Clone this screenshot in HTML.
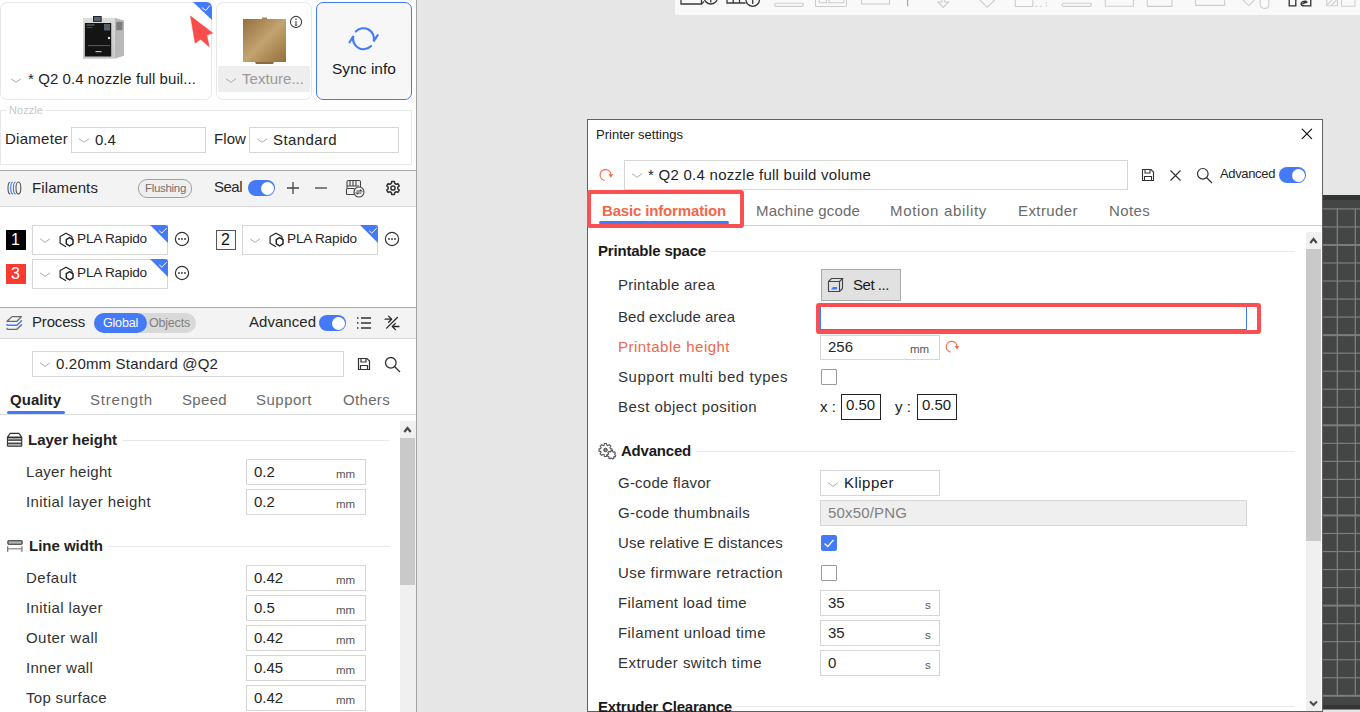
<!DOCTYPE html>
<html><head><meta charset="utf-8"><title>Printer settings</title>
<style>
html,body{margin:0;padding:0;width:1360px;height:712px;overflow:hidden;background:#e6e6e6;}
body{position:relative;font-family:"Liberation Sans",sans-serif;}
.r{position:absolute;}
.t{position:absolute;line-height:1;white-space:nowrap;}
svg.r{overflow:visible;}
</style></head><body>
<div class="r" style="left:0px;top:0px;width:1360px;height:712px;background:#e6e6e6;"></div>
<div class="r" style="left:0px;top:0px;width:416px;height:712px;background:#fff;"></div>
<div class="r" style="left:416px;top:0px;width:1px;height:712px;background:#a3a3a3;"></div>
<div class="r" style="left:675px;top:0px;width:685px;height:15px;background:#f9f9f9;"></div>
<svg class="r" style="left:0px;top:0px" width="1360" height="16" viewBox="0 0 1360 16">
<g fill="none" stroke="#3a3a3a" stroke-width="1.3">
<path d="M681 0 V4 H701.5 V0"/><path d="M701.5 4 L704 1.5"/><circle cx="710.8" cy="-2.8" r="6.8"/><path d="M710.8 0 V2.6"/>
<path d="M727 0 V3 H745.5"/><path d="M733.2 0 V3 M739.5 0 V3"/><circle cx="752.7" cy="-0.5" r="6.8"/><path d="M752.7 0 V4"/>
</g>
<g fill="none" stroke="#cdcdcd" stroke-width="1.1">
<rect x="774.5" y="3.2" width="29" height="3.2" rx="1.6"/>
<rect x="815.5" y="-4" width="31" height="10.5" rx="0.8"/><path d="M819.3 0 V2.8 H826.5 V0 M829 0 V2.8 H843.8 V0"/>
<path d="M861.5 0 V4 H889.5 V0"/><path d="M907.6 0 V6.3" stroke="#aaa" stroke-width="1.3"/>
<path d="M942 0 V2 H938 L943.3 7.5 L948.6 2 H944.6 V0"/>
<path d="M979.8 0 L987.3 7.2 L994.8 0"/>
<path d="M1015.3 0 V6.5 H1032.8 V0"/><path d="M1035 6.2 H1037.5 M1040 6.2 H1042 M1046.2 2 V3.5 M1046.2 5 V6.2" />
<path d="M1062 0 V0"/><rect x="1062" y="3.2" width="29.5" height="3.2" rx="1.6"/>
<path d="M1105.3 0 V6.3 H1133.4 V0"/>
<path d="M1147.3 0 V6.4 H1172 V0"/>
<path d="M1195.6 0 V5.4 H1224.6 V0"/>
<path d="M1243 0 L1248.8 5.6 L1254.5 0"/>
<path d="M1260.2 0 V4.5 Q1260.2 8.4 1264.6 8.4 Q1268.9 8.4 1268.9 4.5 V0"/>
</g>
<g fill="none" stroke="#333" stroke-width="1.3">
<path d="M1289.2 0 V5.8 H1295.8 V0"/>
<path d="M1310.8 0 V5.8 H1305"/><path d="M1306.5 1.2 Q1301 1 1301 4 Q1301.5 6 1305 5.8 M1302.5 4 Q1304 2.5 1307.5 2"/>
</g>
<g fill="none" stroke="#d0d0d0" stroke-width="1.1">
<path d="M1326.7 0 V5.8 H1337.4 V0"/><path d="M1327.5 4.5 L1332 0 M1331 5.5 L1336.5 0"/>
<path d="M1341.5 0 V6.2 H1355 V0"/>
</g>
</svg>
<div class="r" style="left:0px;top:2px;width:212px;height:98px;background:#fff;box-sizing:border-box;border:1px solid #e8e8e8;border-radius:7px;"></div>
<svg class="r" style="left:78px;top:12px" width="50" height="52" viewBox="0 0 50 52">
<defs><linearGradient id="pf" x1="0" y1="0" x2="0" y2="1"><stop offset="0" stop-color="#dcdcdc"/><stop offset="1" stop-color="#c4c4c4"/></linearGradient></defs>
<path d="M36.5 5.8 L46 8.4 V43.8 L36.5 46.7 Z" fill="#b9b9b9"/>
<rect x="38.3" y="9.9" width="6.2" height="8.3" fill="#7d7d7d"/>
<rect x="5.1" y="5.8" width="31.4" height="40.9" fill="url(#pf)"/>
<rect x="6.9" y="11" width="26.3" height="33.5" fill="#141414"/>
<rect x="15" y="4" width="8.7" height="5.9" fill="#222"/><rect x="16" y="5" width="6.7" height="3.9" fill="#52667a"/>
<rect x="8.5" y="12.5" width="8" height="1" fill="#777"/><rect x="8.5" y="15" width="6" height="0.8" fill="#555"/>
<rect x="26" y="12" width="6" height="6.5" fill="#56606a"/>
<rect x="10" y="33.2" width="22" height="0.9" fill="#5a6a60"/>
<circle cx="31" cy="26" r="1.2" fill="#e0e0e0"/>
<rect x="17.5" y="39" width="6" height="1.2" fill="#bbb"/>
</svg>
<svg class="r" style="left:10px;top:77px" width="12" height="7" viewBox="0 0 12 7"><path d="M1 1.8 L6.0 5.3 L11 1.8" fill="none" stroke="#acacac" stroke-width="1"/></svg>
<div class="t" style="left:28px;top:71.30px;font-size:15px;color:#1f1f1f;letter-spacing:0.074px;">* Q2 0.4 nozzle full buil...</div>
<svg class="r" style="left:193px;top:2px" width="20" height="18" viewBox="0 0 20 18">
<path d="M0 0 H13 Q19 0 19 6 V18 Z" fill="#4479f7"/>
<path d="M8.9 5.6 L12.9 8.5 L17 3.3" fill="none" stroke="#fff" stroke-width="1"/>
</svg>
<svg class="r" style="left:189px;top:14px" width="26" height="34" viewBox="0 0 26 34">
<path d="M1.5 2 L23.6 19 L17.8 21.2 L20.2 32.7 L11.6 25.3 L6.1 29.2 Z" fill="#f94d4d" stroke="#f94d4d" stroke-width="0.6" stroke-linejoin="round"/>
</svg>
<div class="r" style="left:216px;top:2px;width:96px;height:98px;background:#fff;box-sizing:border-box;border:1px solid #e8e8e8;border-radius:7px;"></div>
<svg class="r" style="left:242px;top:17px" width="46" height="49" viewBox="0 0 46 49">
<defs><linearGradient id="tx" x1="0" y1="0" x2="1" y2="1">
<stop offset="0" stop-color="#94703e"/><stop offset="0.5" stop-color="#c3a36f"/><stop offset="1" stop-color="#93703c"/></linearGradient></defs>
<rect x="20" y="0.5" width="5" height="2.5" fill="#a88452"/>
<rect x="1" y="2" width="43" height="43" fill="url(#tx)"/>
<path d="M13 45 H32 L31 47 H14 Z" fill="#8c6a3e"/>
</svg>
<svg class="r" style="left:289px;top:15px" width="14" height="14" viewBox="0 0 14 14">
<circle cx="7" cy="7" r="5.6" fill="none" stroke="#444" stroke-width="1.1"/>
<circle cx="7" cy="4.3" r="0.8" fill="#444"/><path d="M7 6 V10.3 M5.8 10.3 H8.2" stroke="#444" stroke-width="1.1"/>
</svg>
<div class="r" style="left:218px;top:66px;width:92px;height:26px;background:#eeeeee;"></div>
<svg class="r" style="left:225px;top:77px" width="12" height="7" viewBox="0 0 12 7"><path d="M1 1.8 L6.0 5.3 L11 1.8" fill="none" stroke="#acacac" stroke-width="1"/></svg>
<div class="t" style="left:242px;top:71.30px;font-size:15px;color:#9a9a9a;letter-spacing:0.031px;">Texture...</div>
<div class="r" style="left:316px;top:2px;width:96px;height:98px;background:#f7f7f7;box-sizing:border-box;border:1px solid #4479f7;border-radius:7px;"></div>
<svg class="r" style="left:343px;top:20px" width="40" height="36" viewBox="0 0 40 36">
<g fill="none" stroke="#4479f7" stroke-width="2.1" stroke-linecap="round" stroke-linejoin="miter">
<path d="M12.82 11.54 A10.5 10.5 0 0 1 30.64 21.42 L34.7 15.1"/>
<path d="M28.05 25.99 A10.5 10.5 0 0 1 10.36 15.98 L6.6 22.3"/>
</g></svg>
<div class="t" style="left:332px;top:60.88px;font-size:15.5px;color:#1a1a1a;letter-spacing:0.027px;">Sync info</div>
<div class="r" style="left:0px;top:110px;width:412px;height:55px;box-sizing:border-box;border:1px solid #e8e8e8;"></div>
<div class="r" style="left:6px;top:105px;width:40px;height:10px;background:#fff;"></div>
<div class="t" style="left:9px;top:104.69px;font-size:11px;color:#c8c8c8;letter-spacing:0.063px;">Nozzle</div>
<div class="t" style="left:5px;top:131.30px;font-size:15px;color:#262626;letter-spacing:0.269px;">Diameter</div>
<div class="r" style="left:71px;top:127px;width:135px;height:26px;background:#fff;box-sizing:border-box;border:1px solid #d6d6d6;"></div>
<svg class="r" style="left:78px;top:137px" width="12" height="7" viewBox="0 0 12 7"><path d="M1 1.8 L6.0 5.3 L11 1.8" fill="none" stroke="#acacac" stroke-width="1"/></svg>
<div class="t" style="left:95px;top:132.30px;font-size:15px;color:#262626;">0.4</div>
<div class="t" style="left:214px;top:131.30px;font-size:15px;color:#262626;letter-spacing:0.083px;">Flow</div>
<div class="r" style="left:249px;top:127px;width:150px;height:26px;background:#fff;box-sizing:border-box;border:1px solid #d6d6d6;"></div>
<svg class="r" style="left:256px;top:137px" width="12" height="7" viewBox="0 0 12 7"><path d="M1 1.8 L6.0 5.3 L11 1.8" fill="none" stroke="#acacac" stroke-width="1"/></svg>
<div class="t" style="left:273px;top:132.30px;font-size:15px;color:#262626;letter-spacing:0.391px;">Standard</div>
<div class="r" style="left:0px;top:170px;width:416px;height:1px;background:#a8a8a8;"></div>
<div class="r" style="left:0px;top:171px;width:416px;height:35px;background:#f3f3f3;"></div>
<div class="r" style="left:0px;top:206px;width:416px;height:1px;background:#d9d9d9;"></div>
<svg class="r" style="left:7px;top:180px" width="16" height="16" viewBox="0 0 16 16">
<g fill="none" stroke-width="1.1">
<path d="M3.3 2 Q1 2 1 8 Q1 14 3.3 14" stroke="#555"/>
<path d="M6 2 Q3.7 2 3.7 8 Q3.7 14 6 14" stroke="#4479f7"/>
<path d="M8.7 2 Q6.4 2 6.4 8 Q6.4 14 8.7 14" stroke="#4479f7"/>
<ellipse cx="11.4" cy="8" rx="2.4" ry="6" stroke="#555"/>
</g></svg>
<div class="t" style="left:32px;top:180.30px;font-size:15px;color:#262626;letter-spacing:0.110px;">Filaments</div>
<div class="r" style="left:138px;top:179px;width:54px;height:19px;background:#efefef;box-sizing:border-box;border:1px solid #a0a0a0;border-radius:9px;"></div>
<div class="t" style="left:145px;top:183.27px;font-size:11.5px;color:#707070;letter-spacing:-0.308px;">Flushing</div>
<div class="t" style="left:214px;top:179.30px;font-size:15px;color:#262626;letter-spacing:-0.505px;">Seal</div>
<div class="r" style="left:248px;top:180px;width:27px;height:16px;background:#4479f7;border-radius:8.0px;"></div>
<div class="r" style="left:260.5px;top:181.5px;width:13px;height:13px;background:#fff;border-radius:50%;"></div>
<svg class="r" style="left:286px;top:181px" width="14" height="14" viewBox="0 0 14 14"><path d="M7 1 V13 M1 7 H13" stroke="#444" stroke-width="1.3"/></svg>
<svg class="r" style="left:314px;top:181px" width="14" height="14" viewBox="0 0 14 14"><path d="M1 7 H13" stroke="#444" stroke-width="1.3"/></svg>
<svg class="r" style="left:345px;top:179px" width="20" height="19" viewBox="0 0 20 19">
<g fill="none" stroke="#444" stroke-width="1.1">
<path d="M2 9 V3 Q2 1.5 3.5 1.5 H14 Q15.5 1.5 15.5 3 V8"/><path d="M5 2 V7 M8 2 V7 M11 2 V7 M2 7 H14"/>
<rect x="1.5" y="9.5" width="8" height="6" rx="1"/>
<circle cx="14" cy="13" r="5" fill="#f3f3f3"/><path d="M11.5 12 H16.5 L15 10.8 M16.5 14 H11.5 L13 15.2"/>
</g></svg>
<svg class="r" style="left:385px;top:180px" width="16" height="16" viewBox="0 0 16 16">
<path fill="none" stroke="#333" stroke-width="1.5" stroke-linejoin="round" d="M9.37 14.46 L6.63 14.46 L6.33 12.61 L4.85 11.75 L3.10 12.42 L1.72 10.04 L3.18 8.86 L3.18 7.14 L1.72 5.96 L3.10 3.58 L4.85 4.25 L6.33 3.39 L6.63 1.54 L9.37 1.54 L9.67 3.39 L11.15 4.25 L12.90 3.58 L14.28 5.96 L12.82 7.14 L12.82 8.86 L14.28 10.04 L12.90 12.42 L11.15 11.75 L9.67 12.61 Z"/>
<circle cx="8" cy="8" r="2.1" fill="none" stroke="#333" stroke-width="1.5"/>
</svg>
<div class="r" style="left:6px;top:230px;width:20px;height:20px;background:#000;"></div>
<div class="t" style="left:11px;top:231.76px;font-size:16px;color:#fff;">1</div>
<div class="r" style="left:32px;top:225px;width:136px;height:30px;background:#fff;box-sizing:border-box;border:1px solid #d6d6d6;"></div>
<svg class="r" style="left:39px;top:237px" width="12" height="7" viewBox="0 0 12 7"><path d="M1 1.8 L6.0 5.3 L11 1.8" fill="none" stroke="#acacac" stroke-width="1"/></svg>
<svg class="r" style="left:59px;top:232px" width="15" height="16" viewBox="0 0 15 16">
<g fill="none" stroke="#222" stroke-width="1.2" stroke-linejoin="round">
<path d="M13 4.6 L7 1.2 L1.1 4.6 V11.3 L7 14.7"/>
<path d="M10.6 5.6 L14 7.6 V11.8 L10.6 13.9 L7.3 11.8 V7.6 Z" stroke-width="1.5"/>
<path d="M13 4.6 V7.4"/>
</g></svg>
<div class="t" style="left:77px;top:232.49px;font-size:13.6px;color:#262626;letter-spacing:-0.183px;">PLA Rapido</div>
<svg class="r" style="left:150px;top:225px" width="18" height="18" viewBox="0 0 18 18">
<path d="M0 0 H15 Q18 0 18 3 V18 Z" fill="#4479f7"/>
<path d="M9.3 5.9 L11.8 8.1 L16.6 3.2" fill="none" stroke="#fff" stroke-width="1"/>
</svg>
<svg class="r" style="left:173.5px;top:231px" width="16" height="16" viewBox="0 0 16 16">
<circle cx="8" cy="8" r="6.6" fill="none" stroke="#333" stroke-width="1.2"/>
<circle cx="5" cy="8" r="0.9" fill="#333"/><circle cx="8" cy="8" r="0.9" fill="#333"/><circle cx="11" cy="8" r="0.9" fill="#333"/>
</svg>
<div class="r" style="left:216px;top:230px;width:20px;height:20px;background:#f9f9f9;box-sizing:border-box;border:1px solid #555;"></div>
<div class="t" style="left:221px;top:231.76px;font-size:16px;color:#111;">2</div>
<div class="r" style="left:242px;top:225px;width:136px;height:30px;background:#fff;box-sizing:border-box;border:1px solid #d6d6d6;"></div>
<svg class="r" style="left:249px;top:237px" width="12" height="7" viewBox="0 0 12 7"><path d="M1 1.8 L6.0 5.3 L11 1.8" fill="none" stroke="#acacac" stroke-width="1"/></svg>
<svg class="r" style="left:269px;top:232px" width="15" height="16" viewBox="0 0 15 16">
<g fill="none" stroke="#222" stroke-width="1.2" stroke-linejoin="round">
<path d="M13 4.6 L7 1.2 L1.1 4.6 V11.3 L7 14.7"/>
<path d="M10.6 5.6 L14 7.6 V11.8 L10.6 13.9 L7.3 11.8 V7.6 Z" stroke-width="1.5"/>
<path d="M13 4.6 V7.4"/>
</g></svg>
<div class="t" style="left:287px;top:232.49px;font-size:13.6px;color:#262626;letter-spacing:-0.183px;">PLA Rapido</div>
<svg class="r" style="left:360px;top:225px" width="18" height="18" viewBox="0 0 18 18">
<path d="M0 0 H15 Q18 0 18 3 V18 Z" fill="#4479f7"/>
<path d="M9.3 5.9 L11.8 8.1 L16.6 3.2" fill="none" stroke="#fff" stroke-width="1"/>
</svg>
<svg class="r" style="left:383.5px;top:231px" width="16" height="16" viewBox="0 0 16 16">
<circle cx="8" cy="8" r="6.6" fill="none" stroke="#333" stroke-width="1.2"/>
<circle cx="5" cy="8" r="0.9" fill="#333"/><circle cx="8" cy="8" r="0.9" fill="#333"/><circle cx="11" cy="8" r="0.9" fill="#333"/>
</svg>
<div class="r" style="left:6px;top:264px;width:20px;height:20px;background:#fb3a32;"></div>
<div class="t" style="left:11px;top:265.76px;font-size:16px;color:#fff;">3</div>
<div class="r" style="left:32px;top:259px;width:136px;height:30px;background:#fff;box-sizing:border-box;border:1px solid #d6d6d6;"></div>
<svg class="r" style="left:39px;top:271px" width="12" height="7" viewBox="0 0 12 7"><path d="M1 1.8 L6.0 5.3 L11 1.8" fill="none" stroke="#acacac" stroke-width="1"/></svg>
<svg class="r" style="left:59px;top:266px" width="15" height="16" viewBox="0 0 15 16">
<g fill="none" stroke="#222" stroke-width="1.2" stroke-linejoin="round">
<path d="M13 4.6 L7 1.2 L1.1 4.6 V11.3 L7 14.7"/>
<path d="M10.6 5.6 L14 7.6 V11.8 L10.6 13.9 L7.3 11.8 V7.6 Z" stroke-width="1.5"/>
<path d="M13 4.6 V7.4"/>
</g></svg>
<div class="t" style="left:77px;top:266.49px;font-size:13.6px;color:#262626;letter-spacing:-0.183px;">PLA Rapido</div>
<svg class="r" style="left:150px;top:259px" width="18" height="18" viewBox="0 0 18 18">
<path d="M0 0 H15 Q18 0 18 3 V18 Z" fill="#4479f7"/>
<path d="M9.3 5.9 L11.8 8.1 L16.6 3.2" fill="none" stroke="#fff" stroke-width="1"/>
</svg>
<svg class="r" style="left:173.5px;top:265px" width="16" height="16" viewBox="0 0 16 16">
<circle cx="8" cy="8" r="6.6" fill="none" stroke="#333" stroke-width="1.2"/>
<circle cx="5" cy="8" r="0.9" fill="#333"/><circle cx="8" cy="8" r="0.9" fill="#333"/><circle cx="11" cy="8" r="0.9" fill="#333"/>
</svg>
<div class="r" style="left:0px;top:307px;width:416px;height:1px;background:#a8a8a8;"></div>
<div class="r" style="left:0px;top:308px;width:416px;height:30px;background:#f3f3f3;"></div>
<div class="r" style="left:0px;top:338px;width:416px;height:1px;background:#d9d9d9;"></div>
<svg class="r" style="left:6px;top:315px" width="17" height="16" viewBox="0 0 17 16">
<g fill="none" stroke-width="1.3" stroke-linejoin="round" stroke-linecap="round">
<path d="M5.95 1.6 H15.5 L10.9 6.3 H1 Z" stroke="#6a6a6a"/>
<path d="M1 9.4 Q1 10.3 2 10.3 H10.9 L15.5 5.8" stroke="#4479f7" stroke-width="1.5"/>
<path d="M1 13.4 Q1 14.3 2 14.3 H10.9 L15.5 9.8" stroke="#6a6a6a"/>
</g></svg>
<div class="t" style="left:32px;top:314.30px;font-size:15px;color:#262626;letter-spacing:-0.169px;">Process</div>
<div class="r" style="left:94px;top:313px;width:102px;height:20px;background:#d9d9d9;border-radius:10px;"></div>
<div class="r" style="left:94px;top:313px;width:53px;height:20px;background:#4479f7;border-radius:10px;"></div>
<div class="t" style="left:103px;top:317.42px;font-size:12.5px;color:#fff;letter-spacing:-0.188px;">Global</div>
<div class="t" style="left:149px;top:317.42px;font-size:12.5px;color:#808080;letter-spacing:-0.196px;">Objects</div>
<div class="t" style="left:249px;top:314.30px;font-size:15px;color:#262626;letter-spacing:0.036px;">Advanced</div>
<div class="r" style="left:319px;top:315px;width:27px;height:16px;background:#4479f7;border-radius:8.0px;"></div>
<div class="r" style="left:331.5px;top:316.5px;width:13px;height:13px;background:#fff;border-radius:50%;"></div>
<svg class="r" style="left:356px;top:316px" width="16" height="14" viewBox="0 0 16 14">
<g stroke="#333" stroke-width="1.3"><path d="M1 2 H2.5 M1 7 H2.5 M1 12 H2.5"/><path d="M5 2 H15 M5 7 H15 M5 12 H15"/></g></svg>
<svg class="r" style="left:384px;top:315px" width="17" height="16" viewBox="0 0 17 16">
<g fill="none" stroke="#2a2a2a" stroke-width="1.3" stroke-linecap="round" stroke-linejoin="round">
<path d="M2.6 13.1 L13.4 2.5"/><path d="M1.1 4.2 H7.5 M4.6 1.1 L7.7 4.2 L4.6 7.3"/><path d="M15 11.5 H8.5 M11.4 8.4 L8.3 11.5 L11.4 14.6"/>
</g></svg>
<div class="r" style="left:32px;top:351px;width:312px;height:26px;background:#fff;box-sizing:border-box;border:1px solid #d6d6d6;"></div>
<svg class="r" style="left:39px;top:361px" width="12" height="7" viewBox="0 0 12 7"><path d="M1 1.8 L6.0 5.3 L11 1.8" fill="none" stroke="#acacac" stroke-width="1"/></svg>
<div class="t" style="left:56px;top:356.30px;font-size:15px;color:#262626;letter-spacing:0.178px;">0.20mm Standard @Q2</div>
<svg class="r" style="left:357px;top:357px" width="14" height="14" viewBox="0 0 14 14">
<g fill="none" stroke="#333" stroke-width="1.2"><path d="M1.5 1.5 H10 L12.5 4 V12.5 H1.5 Z"/><path d="M4 1.5 V5 H9 V1.5"/><path d="M3.5 12.5 V8.5 H10.5 V12.5"/></g></svg>
<svg class="r" style="left:384px;top:356px" width="17" height="17" viewBox="0 0 17 17">
<g fill="none" stroke="#333" stroke-width="1.3"><circle cx="6.8" cy="6.8" r="5.3"/><path d="M10.5 10.5 L16 16"/></g></svg>
<div class="t" style="left:10px;top:392.30px;font-size:15px;color:#222;font-weight:bold;letter-spacing:0.023px;">Quality</div>
<div class="t" style="left:90px;top:392.30px;font-size:15px;color:#6b6b6b;letter-spacing:0.787px;">Strength</div>
<div class="t" style="left:182px;top:392.30px;font-size:15px;color:#6b6b6b;letter-spacing:0.326px;">Speed</div>
<div class="t" style="left:256px;top:392.30px;font-size:15px;color:#6b6b6b;letter-spacing:0.495px;">Support</div>
<div class="t" style="left:343px;top:392.30px;font-size:15px;color:#6b6b6b;letter-spacing:0.331px;">Others</div>
<div class="r" style="left:7px;top:410.5px;width:58px;height:3px;background:#4479f7;border-radius:2px;"></div>
<div class="r" style="left:0px;top:414px;width:416px;height:1px;background:#dcdcdc;"></div>
<svg class="r" style="left:4px;top:430px" width="22" height="22" viewBox="0 0 22 22">
<g stroke="#2e2e2e" stroke-width="1.1" stroke-linejoin="round">
<path d="M6.2 3.4 H15 L17.8 7.4 H3.4 Z" fill="#fff"/>
<rect x="3.4" y="7.4" width="14.4" height="2.9" rx="0.8" fill="#b0b0b0"/>
<rect x="3.4" y="10.3" width="14.4" height="3" rx="0.8" fill="#fff"/>
<rect x="3.4" y="13.3" width="14.4" height="3" rx="0.8" fill="#b0b0b0"/>
</g></svg>
<div class="t" style="left:28px;top:432.30px;font-size:15px;color:#222;font-weight:bold;letter-spacing:-0.015px;">Layer height</div>
<div class="r" style="left:122px;top:440px;width:267px;height:1px;background:#e8e8e8;"></div>
<div class="t" style="left:26px;top:464.30px;font-size:15px;color:#333;letter-spacing:0.287px;">Layer height</div>
<div class="t" style="left:26px;top:494.30px;font-size:15px;color:#333;letter-spacing:0.414px;">Initial layer height</div>
<svg class="r" style="left:4px;top:536px" width="22" height="22" viewBox="0 0 22 22">
<rect x="3.9" y="4.7" width="14.2" height="3.6" rx="0.8" fill="#b5b5b5" stroke="#2e2e2e" stroke-width="1.1"/>
<g stroke="#6a6a6a" stroke-width="1.2"><path d="M3.7 10.2 V15.8 M17.9 10.2 V15.8"/><path d="M3.7 12.8 H17.9" stroke="#888"/></g>
</svg>
<div class="t" style="left:29px;top:538.30px;font-size:15px;color:#222;font-weight:bold;letter-spacing:-0.015px;">Line width</div>
<div class="r" style="left:108px;top:546px;width:281px;height:1px;background:#e8e8e8;"></div>
<div class="r" style="left:246px;top:459px;width:120px;height:26px;background:#fff;box-sizing:border-box;border:1px solid #d6d6d6;"></div>
<div class="t" style="left:254px;top:464.30px;font-size:15px;color:#262626;">0.2</div>
<div class="t" style="left:336px;top:469.27px;font-size:11.5px;color:#555;">mm</div>
<div class="r" style="left:246px;top:489px;width:120px;height:26px;background:#fff;box-sizing:border-box;border:1px solid #d6d6d6;"></div>
<div class="t" style="left:254px;top:494.30px;font-size:15px;color:#262626;">0.2</div>
<div class="t" style="left:336px;top:499.27px;font-size:11.5px;color:#555;">mm</div>
<div class="t" style="left:26px;top:570.30px;font-size:15px;color:#333;letter-spacing:0.497px;">Default</div>
<div class="r" style="left:246px;top:565px;width:120px;height:26px;background:#fff;box-sizing:border-box;border:1px solid #d6d6d6;"></div>
<div class="t" style="left:254px;top:570.30px;font-size:15px;color:#262626;">0.42</div>
<div class="t" style="left:336px;top:575.27px;font-size:11.5px;color:#555;">mm</div>
<div class="t" style="left:26px;top:600.30px;font-size:15px;color:#333;letter-spacing:0.408px;">Initial layer</div>
<div class="r" style="left:246px;top:595px;width:120px;height:26px;background:#fff;box-sizing:border-box;border:1px solid #d6d6d6;"></div>
<div class="t" style="left:254px;top:600.30px;font-size:15px;color:#262626;">0.5</div>
<div class="t" style="left:336px;top:605.27px;font-size:11.5px;color:#555;">mm</div>
<div class="t" style="left:26px;top:630.30px;font-size:15px;color:#333;letter-spacing:0.448px;">Outer wall</div>
<div class="r" style="left:246px;top:625px;width:120px;height:26px;background:#fff;box-sizing:border-box;border:1px solid #d6d6d6;"></div>
<div class="t" style="left:254px;top:630.30px;font-size:15px;color:#262626;">0.42</div>
<div class="t" style="left:336px;top:635.27px;font-size:11.5px;color:#555;">mm</div>
<div class="t" style="left:26px;top:660.30px;font-size:15px;color:#333;letter-spacing:0.281px;">Inner wall</div>
<div class="r" style="left:246px;top:655px;width:120px;height:26px;background:#fff;box-sizing:border-box;border:1px solid #d6d6d6;"></div>
<div class="t" style="left:254px;top:660.30px;font-size:15px;color:#262626;">0.45</div>
<div class="t" style="left:336px;top:665.27px;font-size:11.5px;color:#555;">mm</div>
<div class="t" style="left:26px;top:690.30px;font-size:15px;color:#333;letter-spacing:0.315px;">Top surface</div>
<div class="r" style="left:246px;top:685px;width:120px;height:26px;background:#fff;box-sizing:border-box;border:1px solid #d6d6d6;"></div>
<div class="t" style="left:254px;top:690.30px;font-size:15px;color:#262626;">0.42</div>
<div class="t" style="left:336px;top:695.27px;font-size:11.5px;color:#555;">mm</div>
<div class="r" style="left:400px;top:421px;width:16px;height:291px;background:#f0f0f0;"></div>
<div class="r" style="left:400px;top:438px;width:15px;height:147px;background:#c9c9c9;"></div>
<svg class="r" style="left:401px;top:425px" width="13" height="10" viewBox="0 0 13 10"><path d="M3.3 7 L6.5 3 L9.7 7" fill="none" stroke="#474747" stroke-width="2.1"/></svg>
<div class="r" style="left:1323px;top:195px;width:37px;height:510px;background:#444645;"></div>
<div class="r" style="left:1323px;top:195px;width:37px;height:4.5px;background:#333433;"></div>
<svg class="r" style="left:1323px;top:0px" width="37" height="712" viewBox="0 0 37 712"><rect x="0" y="208.30" width="37" height="1.2" fill="#7b7e7b"/><rect x="0" y="226.33" width="37" height="1.2" fill="#7b7e7b"/><rect x="0" y="243.97" width="37" height="2.0" fill="#7b7e7b"/><rect x="0" y="262.40" width="37" height="1.2" fill="#7b7e7b"/><rect x="0" y="280.43" width="37" height="1.2" fill="#7b7e7b"/><rect x="0" y="298.46" width="37" height="1.2" fill="#7b7e7b"/><rect x="0" y="316.50" width="37" height="1.2" fill="#7b7e7b"/><rect x="0" y="334.13" width="37" height="2.0" fill="#7b7e7b"/><rect x="0" y="352.56" width="37" height="1.2" fill="#7b7e7b"/><rect x="0" y="370.60" width="37" height="1.2" fill="#7b7e7b"/><rect x="0" y="388.63" width="37" height="1.2" fill="#7b7e7b"/><rect x="0" y="406.66" width="37" height="1.2" fill="#7b7e7b"/><rect x="0" y="424.30" width="37" height="2.0" fill="#7b7e7b"/><rect x="0" y="442.73" width="37" height="1.2" fill="#7b7e7b"/><rect x="0" y="460.76" width="37" height="1.2" fill="#7b7e7b"/><rect x="0" y="478.79" width="37" height="1.2" fill="#7b7e7b"/><rect x="0" y="496.83" width="37" height="1.2" fill="#7b7e7b"/><rect x="0" y="514.46" width="37" height="2.0" fill="#7b7e7b"/><rect x="0" y="532.89" width="37" height="1.2" fill="#7b7e7b"/><rect x="0" y="550.93" width="37" height="1.2" fill="#7b7e7b"/><rect x="0" y="568.96" width="37" height="1.2" fill="#7b7e7b"/><rect x="0" y="586.99" width="37" height="1.2" fill="#7b7e7b"/><rect x="0" y="604.63" width="37" height="2.0" fill="#7b7e7b"/><rect x="0" y="623.06" width="37" height="1.2" fill="#7b7e7b"/><rect x="0" y="641.09" width="37" height="1.2" fill="#7b7e7b"/><rect x="0" y="659.12" width="37" height="1.2" fill="#7b7e7b"/><rect x="0" y="677.16" width="37" height="1.2" fill="#7b7e7b"/><rect x="0" y="694.79" width="37" height="2.0" fill="#7b7e7b"/><rect x="13.65" y="208.3" width="1.3" height="488.2" fill="#7b7e7b"/><rect x="31.65" y="208.3" width="1.3" height="488.2" fill="#7b7e7b"/></svg>
<div class="r" style="left:1323px;top:705px;width:37px;height:4px;background:#343534;"></div>
<div class="r" style="left:1323px;top:709px;width:37px;height:1px;background:#8a8a8a;"></div>
<div class="r" style="left:587px;top:119px;width:736px;height:593px;background:#fff;box-sizing:border-box;border:1px solid #606060;"></div>
<div class="t" style="left:596px;top:128.00px;font-size:13px;color:#1a1a1a;letter-spacing:0.019px;">Printer settings</div>
<svg class="r" style="left:1301px;top:128px" width="12" height="12" viewBox="0 0 12 12"><path d="M1.2 1.2 L10.6 10.6 M10.6 1.2 L1.2 10.6" stroke="#111" stroke-width="1.2" stroke-linecap="round"/></svg>
<svg class="r" style="left:598px;top:166px" width="16" height="16" viewBox="0 0 16 16">
<g fill="none" stroke="#f06a48" stroke-width="1.2" stroke-linecap="round"><path d="M6.10 14.22 A5.4 5.4 0 1 1 12.90 8.70"/></g>
<path d="M10.50 8.30 L15.10 8.30 L12.90 11.80 Z" fill="#f06a48"/>
</svg>
<div class="r" style="left:624px;top:160px;width:504px;height:30px;background:#fff;box-sizing:border-box;border:1px solid #d6d6d6;"></div>
<svg class="r" style="left:631px;top:172px" width="12" height="7" viewBox="0 0 12 7"><path d="M1 1.8 L6.0 5.3 L11 1.8" fill="none" stroke="#acacac" stroke-width="1"/></svg>
<div class="t" style="left:648px;top:167.30px;font-size:15px;color:#1f1f1f;letter-spacing:0.264px;">* Q2 0.4 nozzle full build volume</div>
<svg class="r" style="left:1141px;top:168px" width="14" height="14" viewBox="0 0 14 14">
<g fill="none" stroke="#333" stroke-width="1.1"><path d="M1.5 1.5 H10 L12.5 4 V12.5 H1.5 Z"/><path d="M4 1.5 V5 H9 V1.5"/><path d="M3.5 12.5 V8.5 H10.5 V12.5"/></g></svg>
<svg class="r" style="left:1169px;top:169px" width="13" height="13" viewBox="0 0 13 13"><path d="M1.5 1.5 L11.5 11.5 M11.5 1.5 L1.5 11.5" stroke="#333" stroke-width="1.2"/></svg>
<svg class="r" style="left:1196px;top:167px" width="17" height="17" viewBox="0 0 17 17">
<g fill="none" stroke="#333" stroke-width="1.2"><circle cx="6.8" cy="6.8" r="5.3"/><path d="M10.5 10.5 L16 16"/></g></svg>
<div class="t" style="left:1220px;top:167.00px;font-size:13px;color:#262626;letter-spacing:-0.352px;">Advanced</div>
<div class="r" style="left:1279px;top:167px;width:27px;height:16px;background:#4479f7;border-radius:8.0px;"></div>
<div class="r" style="left:1291.5px;top:168.5px;width:13px;height:13px;background:#fff;border-radius:50%;"></div>
<div class="t" style="left:602px;top:203.30px;font-size:15px;color:#f0674a;font-weight:bold;letter-spacing:-0.158px;">Basic information</div>
<div class="t" style="left:756px;top:203.30px;font-size:15px;color:#6b6b6b;letter-spacing:0.175px;">Machine gcode</div>
<div class="t" style="left:890px;top:203.30px;font-size:15px;color:#6b6b6b;letter-spacing:0.676px;">Motion ability</div>
<div class="t" style="left:1018px;top:203.30px;font-size:15px;color:#6b6b6b;letter-spacing:0.414px;">Extruder</div>
<div class="t" style="left:1109px;top:203.30px;font-size:15px;color:#6b6b6b;letter-spacing:0.363px;">Notes</div>
<div class="r" style="left:599px;top:221px;width:130px;height:3px;background:#4479f7;border-radius:2px;"></div>
<div class="r" style="left:588px;top:225px;width:734px;height:1px;background:#cfcfcf;"></div>
<div class="r" style="left:587px;top:190px;width:157px;height:38px;box-sizing:border-box;border:4px solid #fb4f51;border-radius:3px;"></div>
<div class="r" style="left:1306px;top:232px;width:15px;height:479px;background:#f0f0f0;"></div>
<div class="r" style="left:1306px;top:249px;width:15px;height:292px;background:#c9c9c9;"></div>
<svg class="r" style="left:1307px;top:236px" width="13" height="10" viewBox="0 0 13 10"><path d="M3.3 7 L6.5 3 L9.7 7" fill="none" stroke="#474747" stroke-width="2.1"/></svg>
<svg class="r" style="left:1307px;top:698px" width="13" height="10" viewBox="0 0 13 10"><path d="M3 3.5 L6.5 7 L10 3.5" fill="none" stroke="#4a4a4a" stroke-width="2"/></svg>
<div class="t" style="left:598px;top:243.30px;font-size:15px;color:#1a1a1a;font-weight:bold;letter-spacing:-0.192px;">Printable space</div>
<div class="r" style="left:711px;top:251px;width:584px;height:1px;background:#e8e8e8;"></div>
<div class="t" style="left:618px;top:277.30px;font-size:15px;color:#333;letter-spacing:0.258px;">Printable area</div>
<div class="r" style="left:821px;top:269px;width:80px;height:32px;background:#e1e1e1;box-sizing:border-box;border:1px solid #aaa;"></div>
<svg class="r" style="left:827px;top:277px" width="18" height="16" viewBox="0 0 18 16">
<g fill="none" stroke="#444" stroke-width="1.1"><path d="M1.5 4.5 H12.5 V14.5 H1.5 Z"/><path d="M1.5 4.5 L4.5 1.5 H15.5 L12.5 4.5 M15.5 1.5 V11.5 L12.5 14.5"/></g>
<path d="M4 12.5 L6 10 H10 V12.5 Z" fill="#4479f7"/></svg>
<div class="t" style="left:853px;top:277.30px;font-size:15px;color:#1a1a1a;letter-spacing:-0.455px;">Set ...</div>
<div class="t" style="left:618px;top:309.30px;font-size:15px;color:#333;letter-spacing:0.016px;">Bed exclude area</div>
<div class="r" style="left:820px;top:305px;width:427px;height:25px;background:#fff;box-sizing:border-box;border:1px solid #3d7bff;"></div>
<div class="r" style="left:816px;top:303px;width:445px;height:31px;box-sizing:border-box;border:4px solid #fb4f51;border-radius:3px;"></div>
<div class="t" style="left:618px;top:339.30px;font-size:15px;color:#f0674a;letter-spacing:0.486px;">Printable height</div>
<div class="r" style="left:820px;top:335px;width:120px;height:25px;background:#fff;box-sizing:border-box;border:1px solid #d6d6d6;"></div>
<div class="t" style="left:828px;top:339.30px;font-size:15px;color:#262626;">256</div>
<div class="t" style="left:910px;top:344.27px;font-size:11.5px;color:#555;">mm</div>
<svg class="r" style="left:944px;top:339px" width="16" height="16" viewBox="0 0 16 16">
<g fill="none" stroke="#f06a48" stroke-width="1.2" stroke-linecap="round"><path d="M6.20 13.02 A5.4 5.4 0 1 1 13.00 7.50"/></g>
<path d="M10.60 7.10 L15.20 7.10 L13.00 10.60 Z" fill="#f06a48"/>
</svg>
<div class="t" style="left:618px;top:369.30px;font-size:15px;color:#333;letter-spacing:0.540px;">Support multi bed types</div>
<div class="r" style="left:821px;top:369px;width:16px;height:16px;background:#fff;box-sizing:border-box;border:1px solid #999;border-radius:1px;"></div>
<div class="t" style="left:618px;top:399.30px;font-size:15px;color:#333;letter-spacing:0.446px;">Best object position</div>
<div class="t" style="left:820px;top:399.30px;font-size:15px;color:#1a1a1a;">x :</div>
<div class="r" style="left:841px;top:394px;width:40px;height:26px;background:#fff;box-sizing:border-box;border:1px solid #222;"></div>
<div class="t" style="left:846px;top:397.30px;font-size:15px;color:#1a1a1a;">0.50</div>
<div class="t" style="left:895px;top:399.30px;font-size:15px;color:#1a1a1a;">y :</div>
<div class="r" style="left:917px;top:394px;width:40px;height:26px;background:#fff;box-sizing:border-box;border:1px solid #222;"></div>
<div class="t" style="left:922px;top:397.30px;font-size:15px;color:#1a1a1a;">0.50</div>
<svg class="r" style="left:597px;top:442px" width="20" height="19" viewBox="0 0 20 19">
<path d="M15.00 6.84 L15.00 9.16 L13.32 9.34 L12.85 10.46 L13.91 11.77 L12.27 13.41 L10.96 12.35 L9.84 12.82 L9.66 14.50 L7.34 14.50 L7.16 12.82 L6.04 12.35 L4.73 13.41 L3.09 11.77 L4.15 10.46 L3.68 9.34 L2.00 9.16 L2.00 6.84 L3.68 6.66 L4.15 5.54 L3.09 4.23 L4.73 2.59 L6.04 3.65 L7.16 3.18 L7.34 1.50 L9.66 1.50 L9.84 3.18 L10.96 3.65 L12.27 2.59 L13.91 4.23 L12.85 5.54 L13.32 6.66 Z" fill="none" stroke="#555" stroke-width="1.1" stroke-linejoin="round"/>
<circle cx="8.5" cy="8" r="1.8" fill="#888" stroke="#444" stroke-width="0.9"/>
<path d="M18.78 13.22 L18.27 14.87 L17.12 14.63 L16.52 15.28 L16.84 16.41 L15.23 17.04 L14.70 15.99 L13.82 15.93 L13.14 16.88 L11.64 16.01 L12.13 14.95 L11.63 14.22 L10.46 14.28 L10.21 12.57 L11.34 12.28 L11.60 11.44 L10.83 10.56 L12.00 9.30 L12.93 10.01 L13.76 9.69 L13.96 8.53 L15.68 8.66 L15.71 9.84 L16.47 10.28 L17.50 9.72 L18.47 11.14 L17.57 11.89 L17.70 12.77 Z" fill="#fff" stroke="#555" stroke-width="1.1" stroke-linejoin="round"/>
</svg>
<div class="t" style="left:621px;top:443.30px;font-size:15px;color:#1a1a1a;font-weight:bold;letter-spacing:-0.210px;">Advanced</div>
<div class="r" style="left:696px;top:451px;width:599px;height:1px;background:#e8e8e8;"></div>
<div class="t" style="left:618px;top:475.30px;font-size:15px;color:#333;letter-spacing:0.228px;">G-code flavor</div>
<div class="r" style="left:820px;top:470px;width:120px;height:26px;background:#fff;box-sizing:border-box;border:1px solid #d6d6d6;"></div>
<svg class="r" style="left:827px;top:481px" width="12" height="7" viewBox="0 0 12 7"><path d="M1 1.8 L6.0 5.3 L11 1.8" fill="none" stroke="#acacac" stroke-width="1"/></svg>
<div class="t" style="left:844px;top:475.30px;font-size:15px;color:#1a1a1a;letter-spacing:0.473px;">Klipper</div>
<div class="t" style="left:618px;top:505.30px;font-size:15px;color:#333;letter-spacing:0.360px;">G-code thumbnails</div>
<div class="r" style="left:820px;top:500px;width:427px;height:26px;background:#efefef;box-sizing:border-box;border:1px solid #d6d6d6;"></div>
<div class="t" style="left:828px;top:505.30px;font-size:15px;color:#808080;letter-spacing:0.162px;">50x50/PNG</div>
<div class="t" style="left:618px;top:535.30px;font-size:15px;color:#333;letter-spacing:0.171px;">Use relative E distances</div>
<div class="r" style="left:821px;top:535px;width:16px;height:16px;background:#4479f7;border-radius:2px;"></div>
<svg class="r" style="left:821px;top:535px" width="16" height="16" viewBox="0 0 16 16"><path d="M3.5 8.5 L6.8 11.5 L12.5 4.8" fill="none" stroke="#fff" stroke-width="1.3"/></svg>
<div class="t" style="left:618px;top:565.30px;font-size:15px;color:#333;letter-spacing:0.433px;">Use firmware retraction</div>
<div class="r" style="left:821px;top:565px;width:16px;height:16px;background:#fff;box-sizing:border-box;border:1px solid #999;border-radius:1px;"></div>
<div class="t" style="left:618px;top:595.30px;font-size:15px;color:#333;letter-spacing:0.359px;">Filament load time</div>
<div class="r" style="left:820px;top:590px;width:120px;height:26px;background:#fff;box-sizing:border-box;border:1px solid #d6d6d6;"></div>
<div class="t" style="left:828px;top:595.30px;font-size:15px;color:#262626;">35</div>
<div class="t" style="left:925px;top:600.27px;font-size:11.5px;color:#555;">s</div>
<div class="t" style="left:618px;top:625.30px;font-size:15px;color:#333;letter-spacing:0.439px;">Filament unload time</div>
<div class="r" style="left:820px;top:620px;width:120px;height:26px;background:#fff;box-sizing:border-box;border:1px solid #d6d6d6;"></div>
<div class="t" style="left:828px;top:625.30px;font-size:15px;color:#262626;">35</div>
<div class="t" style="left:925px;top:630.27px;font-size:11.5px;color:#555;">s</div>
<div class="t" style="left:618px;top:655.30px;font-size:15px;color:#333;letter-spacing:0.448px;">Extruder switch time</div>
<div class="r" style="left:820px;top:650px;width:120px;height:26px;background:#fff;box-sizing:border-box;border:1px solid #d6d6d6;"></div>
<div class="t" style="left:828px;top:655.30px;font-size:15px;color:#262626;">0</div>
<div class="t" style="left:925px;top:660.27px;font-size:11.5px;color:#555;">s</div>
<div class="t" style="left:598px;top:699.30px;font-size:15px;color:#1a1a1a;font-weight:bold;letter-spacing:-0.198px;">Extruder Clearance</div>
<div class="r" style="left:735px;top:706px;width:560px;height:1px;background:#e8e8e8;"></div>
</body></html>
